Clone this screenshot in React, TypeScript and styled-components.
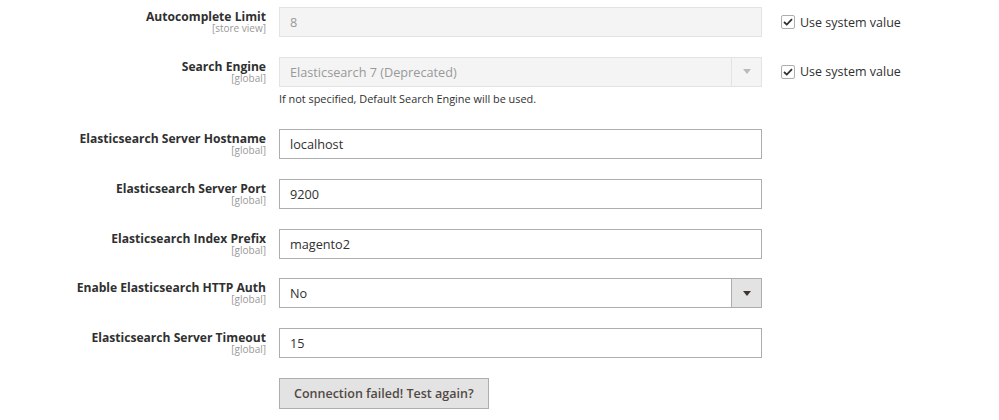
import styled, { createGlobalStyle } from "styled-components";

const GlobalStyle = createGlobalStyle`
    html, body {
        margin: 0;
        padding: 0;
        background: #ffffff;
    }

    body {
        font-family: "Open Sans", "DejaVu Sans", sans-serif;
        color: #303030;
    }
`;

const Form = styled.div`
    width: 999px;
    padding-top: 7px;
    display: flex;
    flex-direction: column;
`;

const FieldRow = styled.div`
    display: grid;
    grid-template-columns: 266px 483px 1fr;
    column-gap: 13px;
    margin-bottom: 19.7px;
`;

const LabelCell = styled.div`
    text-align: right;
    padding-top: 3px;
`;

const LabelText = styled.div`
    font-size: 12.1px;
    font-weight: 700;
    line-height: 13px;
    color: #303030;
`;

const Scope = styled.div`
    font-size: 10px;
    line-height: 11px;
    color: #999999;
`;

const Control = styled.div`
    display: flex;
    flex-direction: column;
`;

const TextInput = styled.div<{ $disabled?: boolean }>`
    box-sizing: border-box;
    height: 30px;
    padding: 0 10px;
    display: flex;
    align-items: center;
    font-size: 12.7px;
    border: 1px solid ${props => (props.$disabled ? "#e3e3e3" : "#adadad")};
    background: ${props => (props.$disabled ? "#f4f4f4" : "#ffffff")};
    color: ${props => (props.$disabled ? "#999999" : "#303030")};
`;

const SelectBox = styled(TextInput)`
    padding: 0 0 0 10px;
    justify-content: space-between;
`;

const ArrowBox = styled.div<{ $disabled?: boolean }>`
    width: 29px;
    align-self: stretch;
    display: flex;
    align-items: center;
    justify-content: center;
    border-left: 1px solid ${props => (props.$disabled ? "#e3e3e3" : "#adadad")};
    background: ${props => (props.$disabled ? "#f4f4f4" : "#e3e3e3")};
`;

const Arrow = styled.span<{ $disabled?: boolean }>`
    width: 0;
    height: 0;
    border-left: 4px solid transparent;
    border-right: 4px solid transparent;
    border-top: 5px solid ${props => (props.$disabled ? "#bbbbbb" : "#41362f")};
`;

const Hint = styled.div`
    font-size: 10.9px;
    line-height: 18px;
    margin-top: 3px;
    margin-bottom: 2px;
    color: #303030;
`;

const SystemValue = styled.label`
    display: flex;
    align-items: center;
    gap: 5px;
    height: 30px;
    padding-left: 6px;
    font-size: 12.5px;
    color: #303030;
`;

const CheckBox = styled.span`
    box-sizing: border-box;
    width: 14px;
    height: 14px;
    border: 1px solid #adadad;
    border-radius: 2px;
    background: #ffffff;
    display: flex;
    align-items: center;
    justify-content: center;
`;

const TestButton = styled.button`
    align-self: flex-start;
    box-sizing: border-box;
    height: 31px;
    padding: 0 14px;
    font-family: "Open Sans", "DejaVu Sans", sans-serif;
    font-size: 12.5px;
    font-weight: 600;
    color: #514943;
    background: #e3e3e3;
    border: 1px solid #adadad;
    border-radius: 0;
`;

const Check = () => (
    <CheckBox>
        <svg width="10" height="8" viewBox="0 0 10 8">
            <path d="M1 4 L3.8 6.6 L9 1.2" fill="none" stroke="#303030" strokeWidth="1.8" />
        </svg>
    </CheckBox>
);

type FieldLabelProps = { text: string; scope: string };

const FieldLabel = ({ text, scope }: FieldLabelProps) => (
    <LabelCell>
        <LabelText>{text}</LabelText>
        <Scope>[{scope}]</Scope>
    </LabelCell>
);

const textFields = [
    { label: "Elasticsearch Server Hostname", value: "localhost" },
    { label: "Elasticsearch Server Port", value: "9200" },
    { label: "Elasticsearch Index Prefix", value: "magento2" },
];

const App = () => (
    <>
        <GlobalStyle />
        <Form>
            <FieldRow>
                <FieldLabel text="Autocomplete Limit" scope="store view" />
                <Control>
                    <TextInput $disabled>8</TextInput>
                </Control>
                <SystemValue>
                    <Check />
                    Use system value
                </SystemValue>
            </FieldRow>

            <FieldRow>
                <FieldLabel text="Search Engine" scope="global" />
                <Control>
                    <SelectBox $disabled>
                        Elasticsearch 7 (Deprecated)
                        <ArrowBox $disabled>
                            <Arrow $disabled />
                        </ArrowBox>
                    </SelectBox>
                    <Hint>If not specified, Default Search Engine will be used.</Hint>
                </Control>
                <SystemValue>
                    <Check />
                    Use system value
                </SystemValue>
            </FieldRow>

            {textFields.map(field => (
                <FieldRow key={field.label}>
                    <FieldLabel text={field.label} scope="global" />
                    <Control>
                        <TextInput>{field.value}</TextInput>
                    </Control>
                </FieldRow>
            ))}

            <FieldRow>
                <FieldLabel text="Enable Elasticsearch HTTP Auth" scope="global" />
                <Control>
                    <SelectBox>
                        No
                        <ArrowBox>
                            <Arrow />
                        </ArrowBox>
                    </SelectBox>
                </Control>
            </FieldRow>

            <FieldRow>
                <FieldLabel text="Elasticsearch Server Timeout" scope="global" />
                <Control>
                    <TextInput>15</TextInput>
                </Control>
            </FieldRow>

            <FieldRow>
                <div />
                <Control>
                    <TestButton>Connection failed! Test again?</TestButton>
                </Control>
            </FieldRow>
        </Form>
    </>
);

export default App;
